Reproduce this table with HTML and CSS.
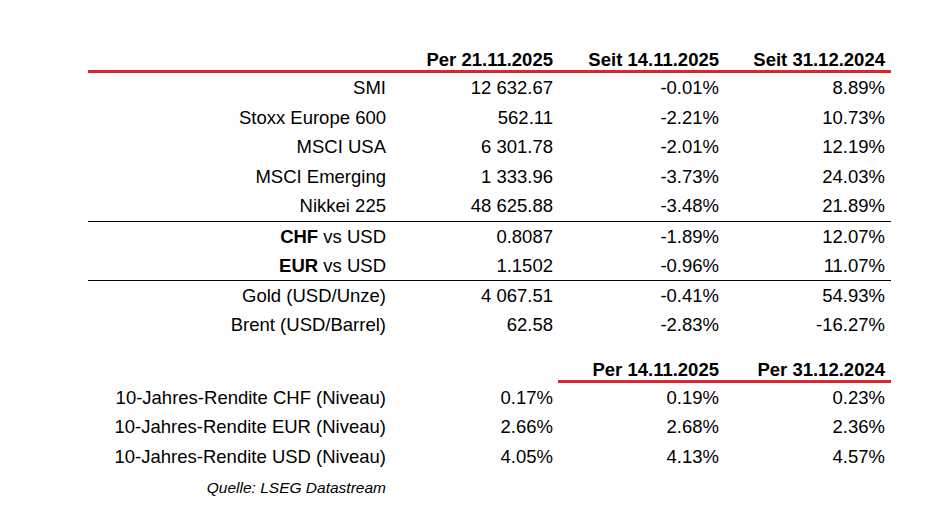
FILE: index.html
```html
<!DOCTYPE html>
<html lang="de">
<head>
<meta charset="utf-8">
<title>Marktübersicht</title>
<link rel="stylesheet" href="styles.css">
</head>
<body>
<div class="sheet">
  <div class="row head">
    <div class="cell"></div>
    <div class="cell">Per 21.11.2025</div>
    <div class="cell">Seit 14.11.2025</div>
    <div class="cell">Seit 31.12.2024</div>
  </div>
  <div class="row"><div class="cell">SMI</div><div class="cell">12 632.67</div><div class="cell">-0.01%</div><div class="cell">8.89%</div></div>
  <div class="row"><div class="cell">Stoxx Europe 600</div><div class="cell">562.11</div><div class="cell">-2.21%</div><div class="cell">10.73%</div></div>
  <div class="row"><div class="cell">MSCI USA</div><div class="cell">6 301.78</div><div class="cell">-2.01%</div><div class="cell">12.19%</div></div>
  <div class="row"><div class="cell">MSCI Emerging</div><div class="cell">1 333.96</div><div class="cell">-3.73%</div><div class="cell">24.03%</div></div>
  <div class="row"><div class="cell">Nikkei 225</div><div class="cell">48 625.88</div><div class="cell">-3.48%</div><div class="cell">21.89%</div></div>
  <div class="row sep"><div class="cell"><b>CHF</b> vs USD</div><div class="cell">0.8087</div><div class="cell">-1.89%</div><div class="cell">12.07%</div></div>
  <div class="row"><div class="cell"><b>EUR</b> vs USD</div><div class="cell">1.1502</div><div class="cell">-0.96%</div><div class="cell">11.07%</div></div>
  <div class="row sep"><div class="cell">Gold (USD/Unze)</div><div class="cell">4 067.51</div><div class="cell">-0.41%</div><div class="cell">54.93%</div></div>
  <div class="row"><div class="cell">Brent (USD/Barrel)</div><div class="cell">62.58</div><div class="cell">-2.83%</div><div class="cell">-16.27%</div></div>

  <div class="row head2">
    <div class="cell"></div>
    <div class="cell"></div>
    <div class="span">
      <div class="cell">Per 14.11.2025</div>
      <div class="cell">Per 31.12.2024</div>
    </div>
  </div>
  <div class="row"><div class="cell">10-Jahres-Rendite CHF (Niveau)</div><div class="cell">0.17%</div><div class="cell">0.19%</div><div class="cell">0.23%</div></div>
  <div class="row"><div class="cell">10-Jahres-Rendite EUR (Niveau)</div><div class="cell">2.66%</div><div class="cell">2.68%</div><div class="cell">2.36%</div></div>
  <div class="row"><div class="cell">10-Jahres-Rendite USD (Niveau)</div><div class="cell">4.05%</div><div class="cell">4.13%</div><div class="cell">4.57%</div></div>

  <div class="source">Quelle: LSEG Datastream</div>
</div>
</body>
</html>
```

FILE: styles.css
```css
html, body {
  margin: 0;
  padding: 0;
  background: #ffffff;
}

body {
  font-family: "Liberation Sans", Arial, sans-serif;
  font-size: 18.5px;
  color: #000000;
}

.sheet {
  margin-left: 88px;
  width: 803px;
  padding-top: 49px;
}

.row {
  display: grid;
  grid-template-columns: 298px 167px 166px 166px 6px;
  height: 29.6px;
  line-height: 29.6px;
  box-sizing: border-box;
}

.cell {
  text-align: right;
  white-space: nowrap;
}

.cell b {
  font-weight: bold;
}

.head {
  height: 24px;
  line-height: 21px;
  font-weight: bold;
  border-bottom: 3px solid #d9282b;
}

.sep {
  border-top: 1px solid #000000;
}

.head2 {
  margin-top: 19.4px;
  height: 24px;
  line-height: 21px;
  font-weight: bold;
}

.span {
  grid-column: 3 / 6;
  display: grid;
  grid-template-columns: 161px 166px 6px;
  margin-left: -5px;
  border-bottom: 3px solid #d9282b;
  height: 24px;
  box-sizing: border-box;
}

.head2 .span {
  margin-left: 5px;
  grid-template-columns: 161px 166px 6px;
}

.source {
  width: 298px;
  text-align: right;
  font-style: italic;
  font-size: 15.5px;
  line-height: 22px;
  margin-top: 5.5px;
}
```
